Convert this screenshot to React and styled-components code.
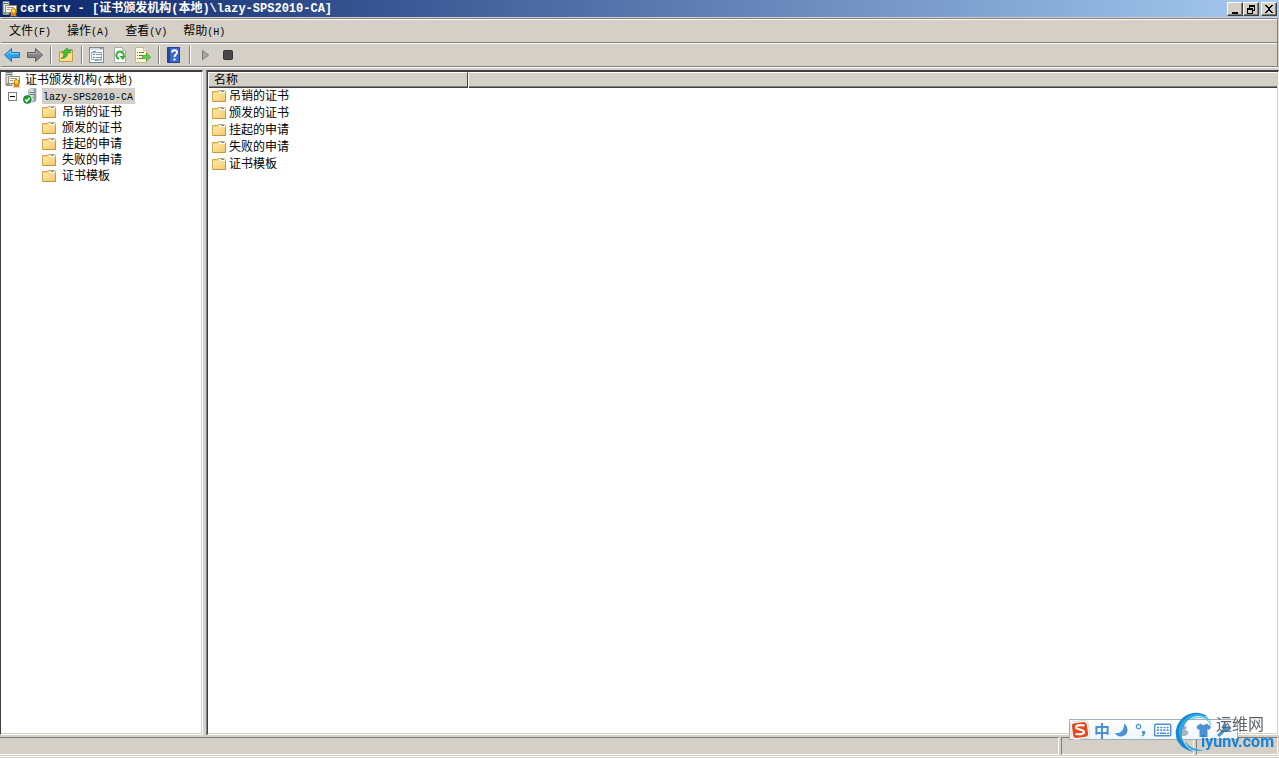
import React from 'react';
import styled, { createGlobalStyle, css } from 'styled-components';

const GlobalStyle = createGlobalStyle`
    * {
        box-sizing: border-box;
    }
    body {
        margin: 0;
        background: #d4d0c8;
        color: #000;
        font-family: "Liberation Mono", "Noto Sans CJK SC", monospace;
        font-size: 12px;
        line-height: 18px;
    }
    button {
        margin: 0;
        padding: 0;
        border: 0;
        background: none;
        font: inherit;
        color: inherit;
    }
    svg {
        display: block;
        flex: none;
    }
`;

const Window = styled.div`
    display: flex;
    flex-direction: column;
    height: 100vh;
    overflow: hidden;
`;

const TitleBar = styled.header`
    display: flex;
    align-items: center;
    flex: none;
    height: 17px;
    padding: 0 2px;
    gap: 2px;
    background: linear-gradient(to right, #0a246a, #a6caf0);
`;

const Title = styled.h1`
    flex: 1;
    margin: 0;
    font-size: 12px;
    line-height: 16px;
    color: #fff;
    white-space: nowrap;
`;

const CaptionGroup = styled.div`
    display: flex;
`;

const CaptionButton = styled.button`
    display: flex;
    align-items: center;
    justify-content: center;
    width: 16px;
    height: 14px;
    background: #d4d0c8;
    border: 1px solid;
    border-color: #fff #404040 #404040 #fff;
    box-shadow: inset -1px -1px #808080;
`;

const Bars = styled.div`
    flex: none;
    margin: 1px 1px 0;
    border: 1px solid #808080;
    border-left: 0;
    box-shadow: 0 1px #fff;
`;

const band = css`
    display: flex;
    align-items: center;
    border-top: 1px solid #fff;
`;

const MenuBar = styled.nav`
    ${band}
    height: 23px;
    padding-top: 2px;
`;

const MenuButton = styled.button`
    padding: 0 8px;
    white-space: nowrap;
`;

const Half = styled.span`
    font-size: 10px;
`;

const ToolBar = styled.div`
    ${band}
    height: 23px;
`;

const BandLine = styled.div`
    height: 1px;
    background: #808080;
`;

const ToolButton = styled.button`
    width: 23px;
    height: 22px;
    padding: 0 4px 0 3px;
`;

const Separator = styled.span`
    width: 2px;
    height: 18px;
    margin: 0 3px;
    border-left: 1px solid #808080;
    border-right: 1px solid #fff;
`;

const Workspace = styled.main`
    display: flex;
    flex: 1;
    gap: 4px;
    min-height: 0;
    padding: 3px 0 2px;
`;

const Pane = styled.section`
    background: #fff;
    border: 1px solid;
    border-color: #404040 #fff #fff #404040;
    border-top-width: 2px;
    overflow: hidden;
    box-shadow: -1px 0 #808080, inset -1px 0 #d4d0c8, inset 0 -1px #d4d0c8;
`;

const TreePane = styled(Pane)`
    flex: none;
    width: 203px;
`;

const ListPane = styled(Pane)`
    flex: 1;
    min-width: 0;
    padding-right: 1px;
`;

const Tree = styled.ul`
    list-style: none;
    margin: 0;
    padding: 0;
`;

const TreeRow = styled.div`
    display: flex;
    align-items: center;
    height: 16px;
    padding-left: ${({ $indent }) => $indent}px;
    white-space: nowrap;
`;

const TreeLabel = styled.span`
    display: block;
    height: 16px;
    margin-left: ${({ $gap }) => $gap || 5}px;
    padding: 0 2px 0 1px;
    ${({ $selected }) => $selected && 'background: #d4d0c8;'}
`;

const TreeToggle = styled.button`
    margin-right: 6px;
`;

const List = styled.table`
    width: 100%;
    table-layout: fixed;
    border-collapse: separate;
    border-spacing: 0;
`;

const HeadCell = styled.th`
    width: ${({ $width }) => ($width ? `${$width}px` : 'auto')};
    height: 16px;
    padding: 0 5px;
    text-align: left;
    font-weight: normal;
    line-height: 14px;
    background: #d4d0c8;
    border: 1px solid;
    border-color: #fff #404040 #404040 #fff;
    border-bottom: 0;
    box-shadow: inset 0 -1px #404040, inset 0 -2px #808080;

    &:last-child {
        border-right: 0;
    }
`;

const Cell = styled.td`
    height: 17px;
    padding: 0 4px;
`;

const ItemName = styled.div`
    display: flex;
    align-items: center;
    gap: 3px;
    height: 17px;
`;

const StatusBar = styled.footer`
    display: flex;
    flex: none;
    gap: 2px;
    height: 21px;
    padding: 0 1px 2px 0;
    background: linear-gradient(#d4d0c8 19px, #fff 19px, #fff 20px, #d4d0c8 20px);
`;

const StatusCell = styled.div`
    flex: ${({ $width }) => ($width ? 'none' : '1')};
    width: ${({ $width }) => ($width ? `${$width}px` : 'auto')};
    height: 18px;
    border: 1px solid;
    border-color: #808080 #fff #fff #808080;

    &:first-child {
        border-left: 0;
    }
`;

const ImeBar = styled.div`
    position: fixed;
    right: 41px;
    bottom: 18px;
    display: flex;
    align-items: center;
    gap: 4px;
    width: 169px;
    height: 21px;
    background: linear-gradient(#fff, #eef6fd);
    border: 1px solid #a3aebb;
`;

const ImeMode = styled.span`
    width: 16px;
    font: bold 16px/16px "Noto Sans CJK SC", sans-serif;
    color: #4a90d2;
`;

const Watermark = styled.div`
    position: fixed;
    right: 5px;
    bottom: 5px;
    width: 99px;
    height: 42px;
`;

const WatermarkRing = styled.svg`
    position: absolute;
    left: 0;
    top: 0;
`;

const WatermarkText = styled.div`
    position: relative;
    padding: 2px 10px 0 0;
    font: 16px/20px "Noto Sans CJK SC", sans-serif;
    text-align: right;
    color: #5f646b;
`;

const WatermarkSite = styled.div`
    position: relative;
    font: bold 16px/18px Roboto, "Liberation Sans", sans-serif;
    text-align: right;
    color: #1983d6;
`;

/* icons */

const ConsoleIcon = () => (
    <svg width="16" height="16" viewBox="0 0 16 16">
        <path d="M1 .5h6v13H1z" fill="#dfe3e6" stroke="#7b858c" />
        <path d="M2 2.5h4" stroke="#59656d" />
        <path d="M1 11h4v3H1z" fill="#8e989f" />
        <path d="M2 12h1v1H2z" fill="#40c93a" />
        <path d="M3.500 4.500h11v7h-11z" fill="#fffdf3" stroke="#a58b55" />
        <path d="M5 6.500h7M5 8.500h3" stroke="#8a97a6" />
        <path d="M9 11l-.5 5 2-1 1 .5 1-.5 2 1-.5-5z" fill="#d8861f" />
        <circle cx="11.500" cy="10" r="2.500" fill="#ffd14d" stroke="#c07d14" />
    </svg>
);

const ServerIcon = () => (
    <svg width="14" height="16" viewBox="0 0 14 16">
        <path d="M5.500 2l2-1.500H13v12L11 14H5.500z" fill="#d9dde0" stroke="#8b949a" strokeWidth=".6" />
        <path d="M10.500 1.500L13 .5v12l-2.500 1.500z" fill="#939da4" />
        <path d="M6.500 4.500h4M6.500 6.500h4" stroke="#6c767d" />
        <path d="M9 9h1v1H9z" fill="#4fe04c" />
        <circle cx="4.300" cy="11.500" r="3.900" fill="#1e9a2d" stroke="#127320" strokeWidth=".7" />
        <path d="M2.200 11.500l1.600 1.800 2.900-3.600" fill="none" stroke="#fff" strokeWidth="1.500" />
    </svg>
);

const FolderIcon = () => (
    <svg width="14" height="13" viewBox="0 0 14 13">
        <defs>
            <linearGradient id="folder" x1="0" y1="0" x2="1" y2="1">
                <stop offset="0" stopColor="#ffeaa6" />
                <stop offset="1" stopColor="#f2cb70" />
            </linearGradient>
        </defs>
        <path d="M.5 11.500v-10H5l1.500-1h6l1 1v10z" fill="#f2d17b" stroke="#cfa953" />
        <path d="M1 3h5l1-1h1l1 1h4v8H1z" fill="url(#folder)" />
        <path d="M7 1h6v2H8z" fill="#fff" />
        <path d="M9 1h3v1H9z" fill="#4a9bea" />
        <path d="M1 11.500h12.500V4" fill="none" stroke="#c2953e" />
    </svg>
);

const ArrowIcon = ({ forward }) => (
    <svg width="16" height="16" viewBox="0 0 16 16">
        <path
            d={forward ? 'M.5 5.500h8v-4l7 6.500-7 6.500v-4h-8z' : 'M15.500 5.500h-8v-4L.5 8l7 6.500v-4h8z'}
            fill={forward ? '#858585' : '#2ba3ea'}
            stroke={forward ? '#5b5b5b' : '#2478b4'}
        />
        <path
            d={forward ? 'M1.500 6.500h8v-2.500l4 4' : 'M14.500 6.500h-8v-2.500l-4 4'}
            fill="none"
            stroke={forward ? '#b0b0b0' : '#7dcffa'}
        />
    </svg>
);

const UpFolderIcon = () => (
    <svg width="16" height="16" viewBox="0 0 16 16">
        <path d="M1.500 14.500v-10h6l1-2h6v12z" fill="#f6d881" stroke="#c39a45" />
        <path d="M2 7h12v7H2z" fill="#f9dd90" />
        <path d="M11 3h3v1h-3z" fill="#4a9bea" />
        <path d="M3 11.500C5 10.500 6 9 6 6H3.500L9 1l4 4.500h-3C10 9 7 12 3 11.500z" fill="#43c12d" stroke="#3a9a2b" strokeWidth=".7" />
    </svg>
);

const PropertiesIcon = () => (
    <svg width="16" height="16" viewBox="0 0 16 16" shapeRendering="crispEdges">
        <path d="M.5 .5h14v15H.5z" fill="#fff" stroke="#7b8b9c" />
        <path d="M1 1h13v2H1z" fill="#d5dce4" />
        <path d="M11 1h2v1h-2z" fill="#5b7ea5" />
        <path d="M2.500 5.500h10v7h-10z" fill="#f4f7fa" stroke="#9babbd" />
        <path d="M4 4.500h3" stroke="#8796a6" />
        <path d="M4 7.500h2M4 10.500h2" stroke="#4988c6" />
        <path d="M7 7.500h5M7 10.500h5" stroke="#8796a6" />
        <path d="M6 13h3v1H6z" fill="#39b5e5" />
        <path d="M10 13h3v1h-3z" fill="#b4c0cd" />
    </svg>
);

const RefreshIcon = () => (
    <svg width="16" height="16" viewBox="0 0 16 16">
        <path d="M2.500 .5h8l3 3v12h-11z" fill="#fff" stroke="#a4a9ac" />
        <path d="M10.500 .5v3h3" fill="#e3e7e9" stroke="#a4a9ac" />
        <path d="M7 11.800A3.700 3.700 0 1 1 11.700 9" fill="none" stroke="#2fae2c" strokeWidth="2" />
        <path d="M7.500 9h6l-2.500 4z" fill="#2fae2c" />
    </svg>
);

const ExportIcon = () => (
    <svg width="16" height="16" viewBox="0 0 16 16">
        <path d="M.5 .5h8l3 3v12H.5z" fill="#fffbdc" stroke="#c4b988" />
        <path d="M8.500 .5v3h3" fill="#fff" stroke="#c4b988" />
        <path d="M2 5.500h1M2 8.500h1M2 11.500h1M4 5.500h5M4 8.500h4M4 11.500h4" stroke="#6d6a55" />
        <path d="M7.500 8.500h4v-2.500l4.200 4-4.200 4v-2.500h-4z" fill="#5ed145" stroke="#3a9b28" strokeWidth=".7" />
    </svg>
);

const HelpIcon = () => (
    <svg width="16" height="16" viewBox="0 0 16 16">
        <path d="M1.500 .5h12v15h-12z" fill="#3f68cf" stroke="#22418f" />
        <path d="M2 1h2v14H2z" fill="#27479d" />
        <path d="M6 5.500c0-3 5-3 5 0 0 2-2.500 2-2.500 4.500" fill="none" stroke="#fff" strokeWidth="1.800" />
        <path d="M7.500 11.500h2v2h-2z" fill="#fff" />
    </svg>
);

const PlayIcon = () => (
    <svg width="16" height="16" viewBox="0 0 16 16">
        <path d="M5.500 3.500v9L11.500 8z" fill="#a9a9a9" stroke="#7a7a7a" />
    </svg>
);

const StopIcon = () => (
    <svg width="16" height="16" viewBox="0 0 16 16">
        <rect x="3.500" y="3.500" width="9" height="9" rx="1" fill="#484848" stroke="#333" />
    </svg>
);

const CollapseIcon = () => (
    <svg width="9" height="9" viewBox="0 0 9 9" shapeRendering="crispEdges">
        <path d="M.5 .5h8v8h-8z" fill="#fff" stroke="#808080" />
        <path d="M2 4.500h5" stroke="#000" />
    </svg>
);

const captionPaths = {
    minimize: 'M2 8h6v2H2z',
    restore: 'M3 1h6v6H7V6h1V3H4v1H3zM1 4h6v6H1zM2 6v3h4V6z',
    close: 'M1 1h2v1h1v1h2V2h1V1h2v1H8v1H7v1H6v2h1v1h1v1h1v1H7V8H6V7H4v1H3v1H1V8h1V7h1V6h1V4H3V3H2V2H1z',
};

const CaptionIcon = ({ name }) => (
    <svg width="10" height="10" viewBox="0 0 10 10" shapeRendering="crispEdges">
        <path d={captionPaths[name]} fillRule="evenodd" />
    </svg>
);

const ImeLogo = () => (
    <svg width="20" height="20" viewBox="0 0 20 20">
        <rect x="1" y="1" width="18" height="18" rx="4" fill="#fff" stroke="#d9d9d9" transform="rotate(-8 10 10)" />
        <rect x="2.500" y="2.500" width="15" height="15" rx="3" fill="#e8481c" transform="rotate(-8 10 10)" />
        <path d="M14.500 5.500C9 4.500 6 5.500 6 7.500S14 9.500 14 12 9 14.500 5.500 14" fill="none" stroke="#fff" strokeWidth="2.200" />
    </svg>
);

const MoonIcon = () => (
    <svg width="16" height="16" viewBox="0 0 16 16">
        <path d="M10 1.500c6 4 4 13-3 13-3 0-5-1.500-6-3.500 6 1 9.500-3.500 9-9.500z" fill="#4a90d2" />
    </svg>
);

const PunctuationIcon = () => (
    <svg width="16" height="16" viewBox="0 0 16 16">
        <circle cx="4.500" cy="4.500" r="2.200" fill="none" stroke="#4a90d2" strokeWidth="1.200" />
        <path d="M8 9h3c.5 3-.5 4.500-3 5.500l-.5-1c1-.5 1.500-1 1.500-2H8z" fill="#4a90d2" />
    </svg>
);

const KeyboardIcon = () => (
    <svg width="18" height="14" viewBox="0 0 18 14">
        <rect x=".7" y="1.200" width="16" height="11.500" rx="1" fill="#fff" stroke="#4a90d2" strokeWidth="1.400" />
        <path d="M3 4.500h12M3 7.200h12" stroke="#4a90d2" strokeWidth="1.700" strokeDasharray="2 1.200" />
        <path d="M3 10.200h2m1 0h6m1 0h2" stroke="#4a90d2" strokeWidth="1.500" />
    </svg>
);

const UserIcon = () => (
    <svg width="16" height="16" viewBox="0 0 16 16">
        <path d="M7 3c5 1 4 4 2 5 5 1 4 5 0 6H6c-3-2-1-5 1-6-2-2-2-4 0-5z" fill="#a9b4bf" />
    </svg>
);

const ShirtIcon = () => (
    <svg width="16" height="16" viewBox="0 0 16 16">
        <path d="M.5 4.500l4-3c2 2 4 2 6 0l4.500 3L13.500 8l-2-1v8h-8V7l-1.500 1z" fill="#4a90d2" />
    </svg>
);

const WrenchIcon = () => (
    <svg width="16" height="16" viewBox="0 0 16 16">
        <path d="M1 13l6-6c-1-4 2-6 5-5L10 4.500l2 2L14.500 4c1 4-2 6-5 5l-6 6z" fill="#4a90d2" />
    </svg>
);

const tools = [
    { label: '后退', icon: <ArrowIcon /> },
    { label: '前进', icon: <ArrowIcon forward /> },
    null,
    { label: '上一级', icon: <UpFolderIcon /> },
    null,
    { label: '属性', icon: <PropertiesIcon /> },
    { label: '刷新', icon: <RefreshIcon /> },
    { label: '导出列表', icon: <ExportIcon /> },
    null,
    { label: '帮助', icon: <HelpIcon /> },
    null,
    { label: '启动', icon: <PlayIcon /> },
    { label: '停止', icon: <StopIcon /> },
];

const menus = [
    ['文件', 'F'],
    ['操作', 'A'],
    ['查看', 'V'],
    ['帮助', 'H'],
];

const folders = ['吊销的证书', '颁发的证书', '挂起的申请', '失败的申请', '证书模板'];

const App = () => {
    return (
        <>
            <GlobalStyle />
            <Window>
                <TitleBar>
                    <ConsoleIcon />
                    <Title>certsrv - [证书颁发机构(本地)\lazy-SPS2010-CA]</Title>
                    <CaptionGroup>
                        <CaptionButton aria-label="最小化"><CaptionIcon name="minimize" /></CaptionButton>
                        <CaptionButton aria-label="还原"><CaptionIcon name="restore" /></CaptionButton>
                    </CaptionGroup>
                    <CaptionButton aria-label="关闭"><CaptionIcon name="close" /></CaptionButton>
                </TitleBar>
                <Bars>
                    <MenuBar>
                        {menus.map(([name, key]) => (
                            <MenuButton key={key}>
                                {name}<Half>({key})</Half>
                            </MenuButton>
                        ))}
                    </MenuBar>
                    <BandLine />
                    <ToolBar>
                        {tools.map((tool, index) =>
                            tool ? (
                                <ToolButton key={index} aria-label={tool.label}>{tool.icon}</ToolButton>
                            ) : (
                                <Separator key={index} />
                            )
                        )}
                    </ToolBar>
                </Bars>
                <Workspace>
                    <TreePane>
                        <Tree>
                            <li>
                                <TreeRow $indent={4}>
                                    <ConsoleIcon />
                                    <TreeLabel $gap={3}>证书颁发机构<Half>(</Half>本地<Half>)</Half></TreeLabel>
                                </TreeRow>
                                <Tree>
                                    <li>
                                        <TreeRow $indent={7}>
                                            <TreeToggle aria-label="折叠"><CollapseIcon /></TreeToggle>
                                            <ServerIcon />
                                            <TreeLabel $selected><Half>lazy-SPS2010-CA</Half></TreeLabel>
                                        </TreeRow>
                                        <Tree>
                                            {folders.map((name) => (
                                                <li key={name}>
                                                    <TreeRow $indent={41}>
                                                        <FolderIcon />
                                                        <TreeLabel>{name}</TreeLabel>
                                                    </TreeRow>
                                                </li>
                                            ))}
                                        </Tree>
                                    </li>
                                </Tree>
                            </li>
                        </Tree>
                    </TreePane>
                    <ListPane>
                        <List>
                            <thead>
                                <tr>
                                    <HeadCell $width={260}>名称</HeadCell>
                                    <HeadCell aria-label="空" />
                                </tr>
                            </thead>
                            <tbody>
                                {folders.map((name) => (
                                    <tr key={name}>
                                        <Cell>
                                            <ItemName>
                                                <FolderIcon />
                                                {name}
                                            </ItemName>
                                        </Cell>
                                        <Cell />
                                    </tr>
                                ))}
                            </tbody>
                        </List>
                    </ListPane>
                </Workspace>
                <StatusBar>
                    <StatusCell />
                    <StatusCell $width={133} />
                    <StatusCell $width={82} />
                </StatusBar>
            </Window>
            <ImeBar>
                <ImeLogo />
                <ImeMode>中</ImeMode>
                <MoonIcon />
                <PunctuationIcon />
                <KeyboardIcon />
                <UserIcon />
                <ShirtIcon />
                <WrenchIcon />
            </ImeBar>
            <Watermark>
                <WatermarkRing width="48" height="42" viewBox="0 0 48 42">
                    <path d="M33 6C22-3 4 3 1 19c-2 11 6 20 18 22C9 36 4 27 8 17 12 6 22 2 33 6z" fill="#1787d2" />
                    <path d="M6 13C13 1 28-2 37 12 28 2 16 3 9 14c-4 8-3 14 1 19C4 28 2 20 6 13z" fill="#2fa9e4" />
                    <path d="M10 30c4 6 10 9 19 9-9 3-17-1-19-9z" fill="#2fa9e4" />
                    <path d="M15 9c8-5 17-3 21 5" fill="none" stroke="#4cbdea" />
                </WatermarkRing>
                <WatermarkText>运维网</WatermarkText>
                <WatermarkSite>iyunv.com</WatermarkSite>
            </Watermark>
        </>
    );
};

export default App;
